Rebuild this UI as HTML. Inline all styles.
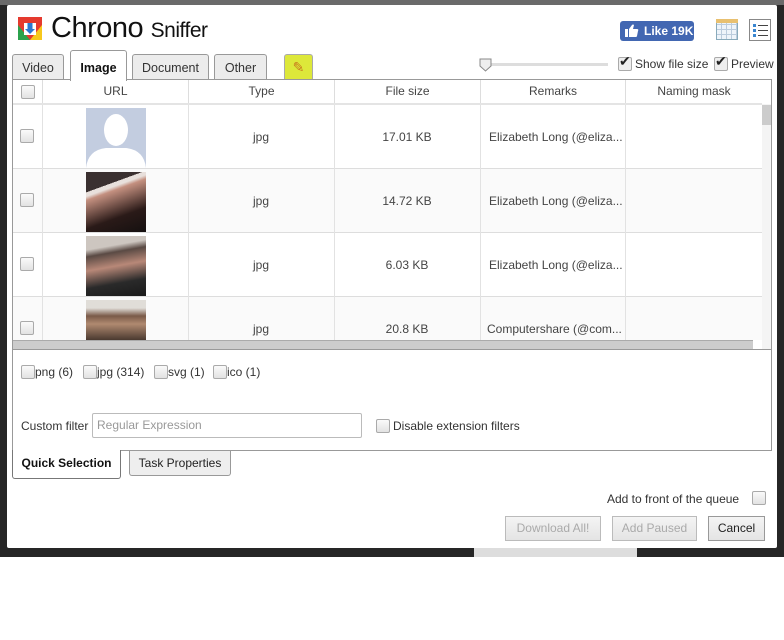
<!DOCTYPE html>
<html><head><meta charset="utf-8"><style>
*{box-sizing:border-box;margin:0;padding:0}
body{width:784px;height:640px;background:#fff;position:relative;overflow:hidden;font-family:"Liberation Sans",sans-serif;font-size:12px;color:#333}
.a{position:absolute}
.cb{position:absolute;width:14px;height:14px;border:1px solid #aaa;border-radius:2px;background:linear-gradient(#fafafa,#e2e2e2)}
.th{position:absolute;top:80px;height:23px;line-height:23px;text-align:center;border-left:1px solid #ddd;color:#444}
.cell{position:absolute;text-align:center;color:#444}
.tab{position:absolute;border:1px solid #999;border-bottom:none;border-radius:3px 3px 0 0;background:#ececec;text-align:center;color:#333;font-size:12.5px}
.btn{position:absolute;top:516px;height:25px;border:1px solid #bbb;background:linear-gradient(#f4f4f4,#e4e4e4);text-align:center;line-height:23px;color:#aaa;font-size:12px}
</style></head><body>
<!-- surround -->
<div class="a" style="left:0;top:0;width:784px;height:557px;background:#262626"></div>
<div class="a" style="left:0;top:0;width:784px;height:5px;background:#6a6a6a"></div>
<div class="a" style="left:474px;top:548px;width:163px;height:9px;background:#ddd"></div>
<div class="a" style="left:7px;top:5px;width:770px;height:543px;background:#fff;border-radius:2px"></div>

<!-- logo -->
<svg class="a" style="left:18px;top:17px" width="24" height="23" viewBox="0 0 24 23">
<rect width="24" height="23" fill="#e53a2f"/>
<polygon points="0,8 12,23 0,23" fill="#2ba24c"/>
<polygon points="24,8 12,23 24,23" fill="#f7c81c"/>
<rect x="6" y="6" width="12" height="12" fill="#fff"/>
<rect x="9.5" y="6" width="5" height="7" fill="#2a78d1"/>
<polygon points="7,12 17,12 12,17" fill="#2a78d1"/>
</svg>
<div class="a" style="left:51px;top:12px;font-size:29px;color:#111;letter-spacing:-0.5px">Chrono <span style="font-size:21px">Sniffer</span></div>

<!-- like -->
<div class="a" style="left:620px;top:21px;width:74px;height:20px;background:#4267b2;border-radius:3px;color:#fff;font-weight:bold;font-size:12px;line-height:20px;padding-left:24px">Like 19K</div>
<svg class="a" style="left:625px;top:24px" width="14" height="13" viewBox="0 0 14 13"><rect x="0" y="5" width="3" height="8" fill="#fff"/><path d="M4 5 L7 1 Q8 0 9 1 L8 5 H12 Q14 5 13 7 L12 12 Q12 13 10 13 H4Z" fill="#fff"/></svg>
<!-- calendar icon -->
<div class="a" style="left:716px;top:19px;width:22px;height:21px;border:1px solid #8ab;background:repeating-linear-gradient(90deg,transparent 0 4px,#bcd 4px 5px),repeating-linear-gradient(0deg,#eef4fa 0 4px,#bcd 4px 5px)"></div>
<div class="a" style="left:716px;top:19px;width:22px;height:4px;background:#e8c070"></div>
<!-- list icon -->
<div class="a" style="left:749px;top:19px;width:22px;height:22px;border:1px solid #888;background:#fff"></div>
<div class="a" style="left:753px;top:24px;width:3px;height:3px;background:#3a86d0;box-shadow:0 5px 0 #3a86d0,0 10px 0 #3a86d0"></div>
<div class="a" style="left:758px;top:25px;width:10px;height:1px;background:#444;box-shadow:0 5px 0 #444,0 10px 0 #444"></div>

<!-- slider -->
<div class="a" style="left:480px;top:63px;width:128px;height:3px;background:#ddd"></div>
<svg class="a" style="left:479px;top:58px" width="13" height="14"><path d="M1 1H12V8L6.5 13L1 8Z" fill="#eee" stroke="#888"/></svg>
<div class="cb" style="left:618px;top:57px;background:#eee"></div><div class="a" style="left:619px;top:53px;font-size:14px;color:#222">✔</div>
<div class="a" style="left:635px;top:57px;color:#333">Show file size</div>
<div class="cb" style="left:714px;top:57px;background:#eee"></div><div class="a" style="left:715px;top:53px;font-size:14px;color:#222">✔</div>
<div class="a" style="left:731px;top:57px;color:#333">Preview</div>

<!-- tabs -->
<div class="tab" style="left:12px;top:54px;width:52px;height:26px;line-height:26px">Video</div>
<div class="tab" style="left:70px;top:50px;width:57px;height:31px;line-height:34px;background:#fff;font-weight:bold;color:#111;z-index:2">Image</div>
<div class="tab" style="left:132px;top:54px;width:77px;height:26px;line-height:26px">Document</div>
<div class="tab" style="left:214px;top:54px;width:53px;height:26px;line-height:26px">Other</div>
<div class="tab" style="left:284px;top:54px;width:29px;height:26px;background:#dde83a;border-color:#aaa;line-height:24px;font-size:14px;color:#c8781e">✎</div>

<!-- table -->
<div class="a" style="left:12px;top:79px;width:760px;height:271px;border:1px solid #999;background:#fff"></div>
<div class="a" style="left:13px;top:103px;width:749px;height:2px;background:#e4e4e4"></div>
<div class="cb" style="left:21px;top:85px"></div>
<div class="th" style="left:42px;width:146px">URL</div>
<div class="th" style="left:188px;width:146px">Type</div>
<div class="th" style="left:334px;width:146px">File size</div>
<div class="th" style="left:480px;width:145px">Remarks</div>
<div class="th" style="left:625px;width:137px">Naming mask</div>

<div class="a" style="left:13px;top:168px;width:749px;height:64px;background:#fafafa"></div>
<div class="a" style="left:13px;top:296px;width:749px;height:44px;background:#fafafa"></div>
<div class="a" style="left:13px;top:168px;width:749px;height:1px;background:#ddd;box-shadow:0 64px 0 #ddd,0 128px 0 #ddd"></div>
<div class="a" style="left:42px;top:105px;width:1px;height:235px;background:#e2e2e2;box-shadow:146px 0 0 #e2e2e2,292px 0 0 #e2e2e2,438px 0 0 #e2e2e2,583px 0 0 #e2e2e2"></div>

<div class="cb" style="left:20px;top:129px"></div>
<div class="cb" style="left:20px;top:193px"></div>
<div class="cb" style="left:20px;top:257px"></div>
<div class="cb" style="left:20px;top:321px"></div>

<svg class="a" style="left:86px;top:108px" width="60" height="60"><rect width="60" height="60" fill="#c3cde0"/><ellipse cx="30" cy="22" rx="12" ry="16" fill="#fff"/><path d="M0 60 Q2 42 20 40 H40 Q58 42 60 60Z" fill="#fff"/></svg>
<div class="a" style="left:86px;top:172px;width:60px;height:60px;background:linear-gradient(160deg,#3a3030 0 25%,#e8e0dc 25% 30%,#c49080 35%,#2a1a18 70%,#151010)"></div>
<div class="a" style="left:86px;top:236px;width:60px;height:60px;background:linear-gradient(170deg,#cdc6c0 0 20%,#5a4a44 30%,#b88878 50%,#2a2a2a 75%,#1a1a1a)"></div>
<div class="a" style="left:86px;top:300px;width:60px;height:40px;background:linear-gradient(180deg,#e0ddd8 0 20%,#7a5a48 40%,#b08a70 60%,#4a3a30)"></div>

<div class="cell" style="left:188px;width:146px;top:130px">jpg</div>
<div class="cell" style="left:188px;width:146px;top:194px">jpg</div>
<div class="cell" style="left:188px;width:146px;top:258px">jpg</div>
<div class="cell" style="left:188px;width:146px;top:322px">jpg</div>
<div class="cell" style="left:334px;width:146px;top:130px">17.01 KB</div>
<div class="cell" style="left:334px;width:146px;top:194px">14.72 KB</div>
<div class="cell" style="left:334px;width:146px;top:258px">6.03 KB</div>
<div class="cell" style="left:334px;width:146px;top:322px">20.8 KB</div>
<div class="cell" style="left:489px;top:130px">Elizabeth Long (@eliza...</div>
<div class="cell" style="left:489px;top:194px">Elizabeth Long (@eliza...</div>
<div class="cell" style="left:489px;top:258px">Elizabeth Long (@eliza...</div>
<div class="cell" style="left:487px;top:322px">Computershare (@com...</div>

<div class="a" style="left:762px;top:104px;width:9px;height:245px;background:#f4f4f4"></div>
<div class="a" style="left:762px;top:105px;width:9px;height:20px;background:#ccc"></div>
<div class="a" style="left:13px;top:340px;width:740px;height:9px;background:#ccc;border-top:1px solid #aaa"></div>

<!-- filters -->
<div class="a" style="left:12px;top:350px;width:760px;height:101px;border:1px solid #999;border-top:none"></div>
<div class="cb" style="left:21px;top:365px"></div><div class="a" style="left:35px;top:365px">png (6)</div>
<div class="cb" style="left:83px;top:365px"></div><div class="a" style="left:97px;top:365px">jpg (314)</div>
<div class="cb" style="left:154px;top:365px"></div><div class="a" style="left:168px;top:365px">svg (1)</div>
<div class="cb" style="left:213px;top:365px"></div><div class="a" style="left:227px;top:365px">ico (1)</div>
<div class="a" style="left:21px;top:419px">Custom filter</div>
<div class="a" style="left:92px;top:413px;width:270px;height:25px;border:1px solid #bbb;border-radius:2px;line-height:23px;padding-left:4px;color:#999">Regular Expression</div>
<div class="cb" style="left:376px;top:419px"></div><div class="a" style="left:393px;top:419px">Disable extension filters</div>

<div class="a" style="left:12px;top:450px;width:109px;height:29px;border:1px solid #777;border-top:none;border-radius:0 0 3px 3px;background:#fff;font-weight:bold;color:#111;line-height:26px;text-align:center">Quick Selection</div>
<div class="a" style="left:129px;top:451px;width:102px;height:25px;border:1px solid #999;border-top:none;border-radius:0 0 3px 3px;background:#eee;line-height:25px;text-align:center;color:#222">Task Properties</div>

<div class="a" style="left:607px;top:492px;color:#333">Add to front of the queue</div>
<div class="cb" style="left:752px;top:491px"></div>
<div class="btn" style="left:505px;width:96px">Download All!</div>
<div class="btn" style="left:612px;width:85px">Add Paused</div>
<div class="btn" style="left:708px;width:57px;color:#222;border-color:#999">Cancel</div>
</body></html>
